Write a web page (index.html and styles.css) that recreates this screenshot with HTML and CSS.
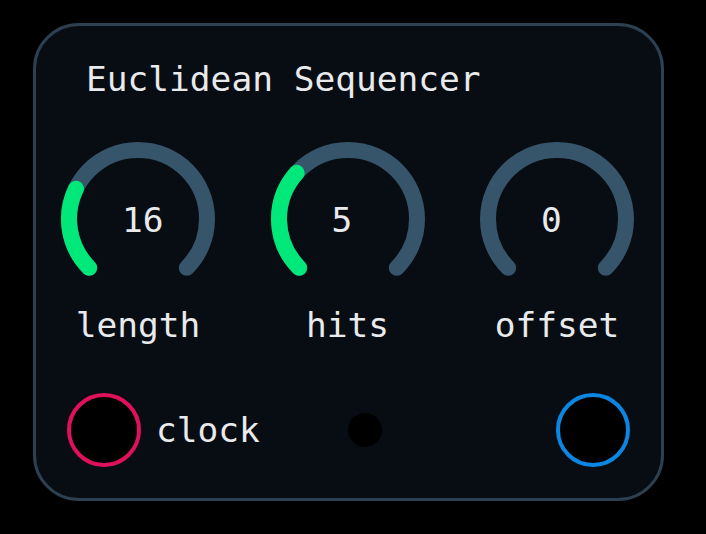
FILE: index.html
```html
<!DOCTYPE html>
<html lang="en">
<head>
<meta charset="utf-8">
<title>Euclidean Sequencer</title>
<link rel="stylesheet" href="styles.css">
</head>
<body>
<div class="card">
  <div class="title">Euclidean Sequencer</div>
  <div class="knobs">
    <div class="knob">
      <div class="dial">
        <svg width="160" height="160" viewBox="0 0 160 160">
          <path class="track" d="M31.21 128.79 A69 69 0 1 1 128.79 128.79"/>
          <path class="fill" d="M31.21 128.79 A69 69 0 0 1 17.98 49.75"/>
        </svg>
        <span class="value">16</span>
      </div>
      <div class="label">length</div>
    </div>
    <div class="knob">
      <div class="dial">
        <svg width="160" height="160" viewBox="0 0 160 160">
          <path class="track" d="M31.21 128.79 A69 69 0 1 1 128.79 128.79"/>
          <path class="fill" d="M31.21 128.79 A69 69 0 0 1 28.72 33.83"/>
        </svg>
        <span class="value">5</span>
      </div>
      <div class="label">hits</div>
    </div>
    <div class="knob">
      <div class="dial">
        <svg width="160" height="160" viewBox="0 0 160 160">
          <path class="track" d="M31.21 128.79 A69 69 0 1 1 128.79 128.79"/>
        </svg>
        <span class="value">0</span>
      </div>
      <div class="label">offset</div>
    </div>
  </div>
  <div class="ports">
    <div class="jack jack-in"></div>
    <div class="port-label">clock</div>
    <div class="led"></div>
    <div class="jack jack-out"></div>
  </div>
</div>
</body>
</html>
```
FILE: styles.css
```css
html, body {
  margin: 0;
  padding: 0;
  background: #000;
}
body {
  width: 706px;
  height: 534px;
  overflow: hidden;
  font-family: "DejaVu Sans Mono", "Liberation Mono", monospace;
  font-size: 34.5px;
  color: #e8eaec;
}
.card {
  box-sizing: border-box;
  margin: 23px 0 0 33px;
  width: 631px;
  height: 478px;
  border: 3px solid #2c4051;
  border-radius: 46px;
  background: #080d13;
  padding-top: 33px;
  display: flex;
  flex-direction: column;
}
.title {
  line-height: 40px;
  height: 40px;
  padding-left: 50px;
  white-space: nowrap;
}
.knobs {
  margin-top: 40px;
  padding-left: 22px;
  display: flex;
  gap: 49.5px;
}
.knob {
  width: 160px;
  display: flex;
  flex-direction: column;
  align-items: center;
}
.dial {
  position: relative;
  width: 160px;
  height: 160px;
}
.dial svg {
  display: block;
}
.track {
  fill: none;
  stroke: #36546a;
  stroke-width: 16;
  stroke-linecap: round;
}
.fill {
  fill: none;
  stroke: #00e87a;
  stroke-width: 16;
  stroke-linecap: round;
}
.value {
  position: absolute;
  left: 64px;
  top: 61px;
  line-height: 40px;
}
.label {
  margin-top: 6px;
  line-height: 40px;
  height: 40px;
  white-space: nowrap;
}
.ports {
  margin-top: 48px;
  padding-left: 31px;
  display: flex;
  align-items: center;
  height: 74px;
}
.jack {
  box-sizing: border-box;
  width: 74px;
  height: 74px;
  border-radius: 50%;
  background: #000;
  border: 4px solid;
}
.jack-in {
  border-color: #e0115c;
}
.jack-out {
  border-color: #0b86e3;
  margin-left: 174px;
}
.port-label {
  margin-left: 15px;
  line-height: 40px;
  width: 105px;
}
.led {
  margin-left: 87px;
  width: 34px;
  height: 34px;
  border-radius: 50%;
  background: #000;
}
```
